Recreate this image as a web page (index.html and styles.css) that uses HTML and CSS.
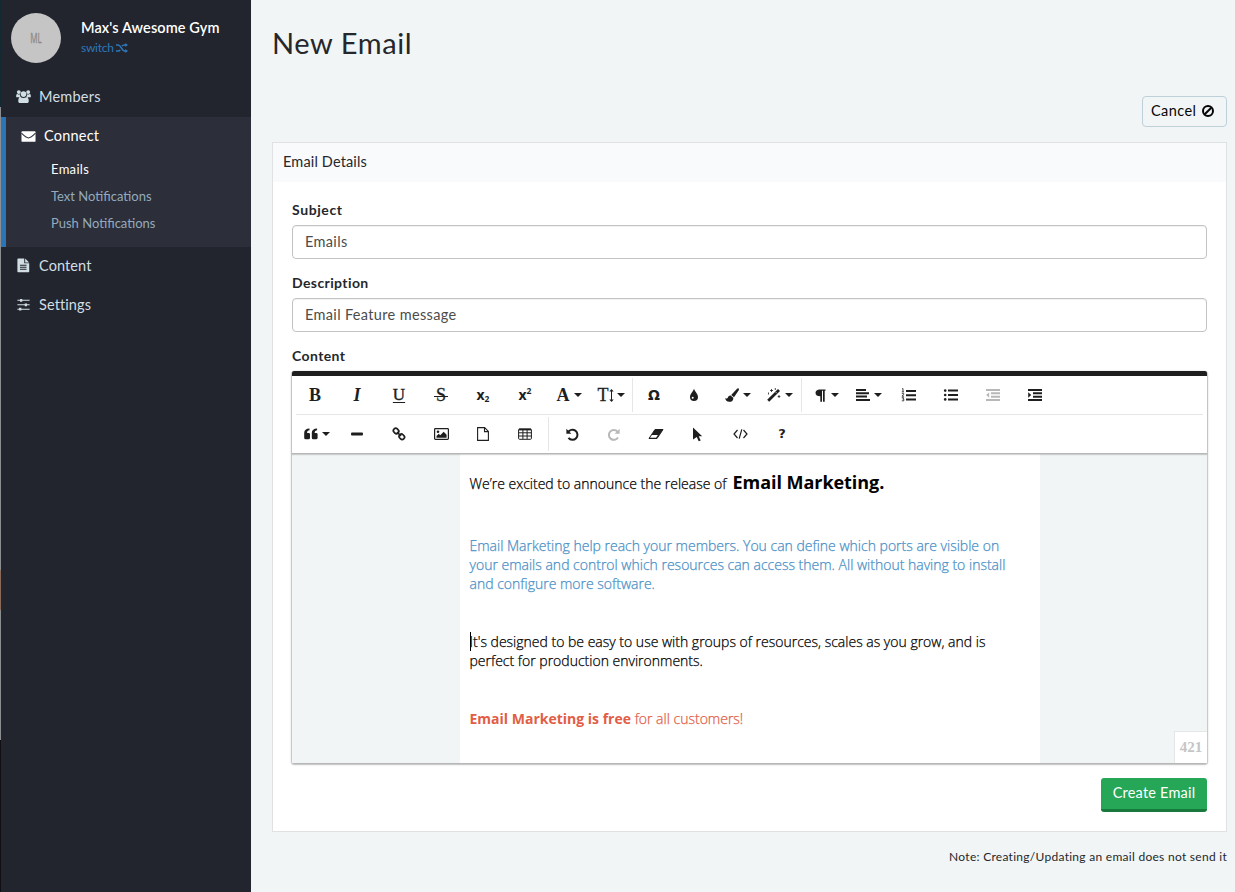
FILE: index.html
```html
<!DOCTYPE html>
<html lang="en">
<head>
<meta charset="utf-8">
<title>New Email</title>
<link rel="stylesheet" href="styles.css">
</head>
<body>
<div class="app">
  <aside class="sidebar">
    <div class="profile">
      <div class="avatar"><span>ML</span></div>
      <div class="profile-text">
        <div class="gym"><span>Max's Awesome Gym</span></div>
        <a class="switch"><span>switch</span>
          <svg width="12" height="10" viewBox="0 0 12 10" fill="none" stroke="currentColor" stroke-width="1.5"><path d="M0 2h2.2C5.5 2 5.5 8 8.5 8H10M0 8h2.2c1 0 1.6-.5 2-1.2M6 3.2C6.500 2.400 7.200 2 8.500 2H10"/><path d="M9.300 0v4L12 2zM9.300 6v4L12 8z" fill="currentColor" stroke="none"/></svg>
        </a>
      </div>
    </div>
    <nav class="nav">
      <a class="nav-item">
        <svg width="16" height="16" viewBox="0 0 16 16" fill="currentColor"><circle cx="3" cy="3.300" r="2.100"/><circle cx="13" cy="3.300" r="2.100"/><circle cx="8" cy="5.400" r="3"/><path d="M.2 8.900V7.200c0-1.200.5-1.900 1.400-1.900.8.700 1.700.8 2.600.3 0 1.400.4 2.300 1.100 3.300zM15.800 8.900V7.200c0-1.200-.5-1.900-1.400-1.900-.8.700-1.700.8-2.600.3 0 1.400-.4 2.300-1.100 3.300zM4.800 8.600c1.900 1.500 4.500 1.500 6.400 0 1.700.1 2.400 1.800 2.400 4.200 0 1.400-.8 2.200-2 2.200H4.400c-1.200 0-2-.8-2-2.200 0-2.400.7-4.100 2.400-4.200z"/></svg>
        <span>Members</span>
      </a>
      <div class="nav-group">
        <a class="nav-item">
          <svg width="16" height="16" viewBox="0 0 16 16"><path fill="currentColor" d="M1.500 2.500h13q1 0 1 1v9.200q0 1-1 1h-13q-1 0-1-1V3.500q0-1 1-1z"/><path d="M.5 4.500C3 7 6 9.500 8 9.500s5-2.500 7.500-5" fill="none" stroke="#2c2e3a" stroke-width="1.100"/></svg>
          <span>Connect</span>
        </a>
        <a class="sub current"><span>Emails</span></a>
        <a class="sub"><span>Text Notifications</span></a>
        <a class="sub"><span>Push Notifications</span></a>
      </div>
      <a class="nav-item lower">
        <svg width="16" height="16" viewBox="0 0 16 16"><path fill="currentColor" d="M2.300.600h6.500v5.100h5.300v8.700q0 .8-.8.800h-11q-.8 0-.8-.8v-13q0-.8.800-.8zM9.800.600l4.200 4.200H9.800z"/><path d="M4.200 7.700h7M4.200 9.900h7M4.200 12.100h7" stroke="#22252e" stroke-width="1.100"/></svg>
        <span>Content</span>
      </a>
      <a class="nav-item lower">
        <svg width="16" height="16" viewBox="0 0 16 16" stroke="currentColor"><path d="M1.500 3.500h13M1.500 8.300h13M1.500 13h13" stroke-width="1.200"/><path d="M5.500 2v3M10.500 6.800v3M4.500 11.500v3" stroke-width="2.400"/></svg>
        <span>Settings</span>
      </a>
    </nav>
  </aside>
  <main class="main">
    <h1><span>New Email</span></h1>
    <div class="actions">
      <button class="cancel"><span>Cancel</span><svg width="12" height="12" viewBox="0 0 12 12" fill="none" stroke="currentColor" stroke-width="2"><circle cx="6" cy="6" r="5"/><path d="M2.700 9.300l6.600-6.600"/></svg></button>
    </div>
    <section class="panel">
      <header><span>Email Details</span></header>
      <div class="panel-body">
        <label class="l-subject"><span>Subject</span></label>
        <div class="input"><span>Emails</span></div>
        <label><span>Description</span></label>
        <div class="input"><span>Email Feature message</span></div>
        <label><span>Content</span></label>
        <div class="editor">
          <div class="toolbar">
            <div class="row">
              <b class="tool letter">B</b>
              <i class="tool letter">I</i>
              <span class="tool letter u">U</span>
              <span class="tool letter strike"><span>S</span></span>
              <span class="tool script-x">x<sub>2</sub></span>
              <span class="tool script-x">x<sup>2</sup></span>
              <span class="tool drop letter first">A<i class="caret"></i></span>
              <span class="tool drop letter size">T<svg width="5" height="13" viewBox="0 0 5 13"><path d="M2.500 1v11" stroke="currentColor"/><path d="M.3 2.500L2.500 0l2.200 2.500zM.3 10.500L2.500 13l2.200-2.500z" fill="currentColor"/></svg><i class="caret"></i></span>
              <span class="sep"></span>
              <b class="tool omega">Ω</b>
              <span class="tool droplet"><svg width="10" height="14" viewBox="0 0 10 14"><path fill="currentColor" d="M5 .8c.8 2.900 4 5.200 4 8.200a4 4 0 0 1-8 0C1 6 4.200 3.700 5 .8z"/><circle cx="3.700" cy="9.700" r="1" fill="#fff"/></svg></span>
              <span class="tool drop back"><svg width="14" height="14" viewBox="0 0 14 14" fill="currentColor"><path d="M13.600.4c.7.600.3 1.500 0 2.100L9 9.300 6.200 6.900l5.600-5.800c.5-.6 1.200-1.200 1.800-.7zM5.600 7.500l2.700 2.200c.2 2.700-1.300 4.100-4 4.100C1.800 13.800.5 12.300.1 10c1.500.9 2.300.7 3-1 .5-1 1.500-1.500 2.500-1.500z"/></svg><i class="caret"></i></span>
              <span class="tool drop back"><svg width="14" height="14" viewBox="0 0 14 14"><path d="M1.200 12.800L12 2" stroke="currentColor" stroke-width="2.800"/><path d="M8.800 4.200l1 1" stroke="#fff" stroke-width=".8"/><path d="M4.500 1v3M3 2.500h3M1.500 4.500v2M8.300 0v2M12 7v3M10.700 8.500h2.600" stroke="currentColor" stroke-width=".8"/></svg><i class="caret"></i></span>
              <span class="sep s2"></span>
              <span class="tool drop"><svg width="11" height="13" viewBox="0 0 11 13"><path fill="currentColor" d="M10.500.500v1.300H9.700v11H8V1.800H7v11H5.300V7.300C2.300 7.300.5 6 .5 4S2.200.5 4.600.5z"/></svg><i class="caret"></i></span>
              <span class="tool drop align"><svg width="14" height="12" viewBox="0 0 14 12"><path d="M0 1h10M0 4.300h13M0 7.600h11M0 11h14" stroke="currentColor" stroke-width="2"/></svg><i class="caret"></i></span>
              <span class="tool list"><svg width="16" height="14" viewBox="0 0 16 14"><path d="M5 3h10M5 7.200h10M5 11.500h10" stroke="currentColor" stroke-width="1.900"/><path d="M1 1.100l1-.6v3.400M.8 3.900H3M.8 5.600h1.900v1L.9 8.200H3M.8 9.700h2l-1 1.400h1v1.700h-2" fill="none" stroke="currentColor" stroke-width=".8"/></svg></span>
              <span class="tool"><svg width="16" height="14" viewBox="0 0 16 14"><path d="M5 2.600h10M5 7h10M5 11.400h10" stroke="currentColor" stroke-width="2"/><g fill="currentColor"><circle cx="2.200" cy="2.600" r="1.300"/><circle cx="2.200" cy="7" r="1.300"/><circle cx="2.200" cy="11.400" r="1.300"/></g></svg></span>
              <span class="tool off"><svg width="14" height="12" viewBox="0 0 14 12"><path d="M0 1h14M5 4.300h9M5 7.700h9M0 11h14" stroke="currentColor" stroke-width="1.900"/><path d="M3.200 3.200v5.600L.2 6z" fill="currentColor"/></svg></span>
              <span class="tool"><svg width="14" height="12" viewBox="0 0 14 12"><path d="M0 1h14M5 4.300h9M5 7.700h9M0 11h14" stroke="currentColor" stroke-width="2"/><path d="M.2 3.200v5.600l3-2.800z" fill="currentColor"/></svg></span>
            </div>
            <div class="row">
              <span class="tool drop quote"><svg width="14" height="12" viewBox="0 0 14 12"><path id="q" fill="currentColor" d="M5.500.5v1.800c-1.600 0-2.400 1-2.400 2.600h1.600q1.300 0 1.300 1.300v3.500q0 1.500-1.500 1.500H1.600Q.2 11.200.2 9.700V5C.2 2.200 2.200.500 5.500.500z"/><use href="#q" x="7.600"/></svg><i class="caret"></i></span>
              <span class="tool"><svg width="12" height="4" viewBox="0 0 12 4"><rect y=".5" width="12" height="3" rx="1" fill="currentColor"/></svg></span>
              <span class="tool"><svg width="14" height="14" viewBox="0 0 14 14" fill="none" stroke="currentColor" stroke-width="1.700"><rect x="1.300" y="1.700" width="5.600" height="4.600" rx="2.200" transform="rotate(45 4.100 4)"/><rect x="7" y="7.500" width="5.600" height="4.600" rx="2.200" transform="rotate(45 9.800 9.800)"/><path d="M5 5l4 4"/></svg></span>
              <span class="tool"><svg width="15" height="12" viewBox="0 0 15 12"><rect x=".6" y=".6" width="13.800" height="10.800" rx=".8" fill="none" stroke="currentColor" stroke-width="1.200"/><circle cx="4" cy="3.800" r="1.300" fill="currentColor"/><path d="M2.500 9.700V8l2.200-2.200 1.500 1.500 3.500-3.600 2.900 3v3z" fill="currentColor"/></svg></span>
              <span class="tool"><svg width="12" height="14" viewBox="0 0 12 14" fill="none" stroke="currentColor" stroke-width="1.100"><path d="M.6.6h7l3.800 3.800v9H.6zM7.500.6v4h4"/></svg></span>
              <span class="tool"><svg width="14" height="12" viewBox="0 0 14 12" fill="none" stroke="currentColor"><rect x=".6" y="1" width="12.800" height="10.300" rx="1"/><path d="M1 1.500h12" stroke-width="1.800"/><path d="M.6 4.800h12.800M.6 8h12.800M4.900 2v9M9.100 2v9"/></svg></span>
              <span class="sep s3"></span>
              <span class="tool"><svg width="13" height="13" viewBox="0 0 13 13"><path d="M2 4.500A5 5 0 1 1 2.500 9.800" fill="none" stroke="currentColor" stroke-width="2"/><path d="M.4.800v5h5z" fill="currentColor"/></svg></span>
              <span class="tool off redo"><svg width="13" height="13" viewBox="0 0 13 13"><path d="M10.500 3.700A4.900 4.900 0 1 0 11 9.500" fill="none" stroke="currentColor" stroke-width="2"/><path d="M12.600.8v5h-5z" fill="currentColor"/></svg></span>
              <span class="tool"><svg width="16" height="12" viewBox="0 0 16 12"><path d="M7 1.500h8L9 10.500H1z" fill="currentColor" stroke="currentColor" stroke-linejoin="round"/><path d="M3.900 6.900h6l-1.800 2.800h-6z" fill="#fff"/></svg></span>
              <span class="tool pointer"><svg width="11" height="15" viewBox="0 0 11 15"><path d="M1 .5l9.200 8.700H6.700l2 4.200-2 .9-1.900-4.300L1 12.500z" fill="currentColor"/></svg></span>
              <span class="tool"><svg width="15" height="10" viewBox="0 0 15 10" fill="none" stroke="currentColor" stroke-width="1.200"><path d="M4.500 1L1 5l3.500 4M10.500 1L14 5l-3.500 4M8.800.4L6.200 9.600"/></svg></span>
              <b class="tool help">?</b>
            </div>
          </div>
          <div class="canvas">
            <article class="doc">
              <p class="intro"><span>We’re excited to announce the release of&nbsp;</span> <strong>Email Marketing.</strong></p>
              <p class="blue">Email Marketing help reach your members. You can define which ports are visible on<br>your emails and control which resources can access them. All without having to install<br>and configure more software.</p>
              <p class="black"><span class="cursor"></span>It's designed to be easy to use with groups of resources, scales as you grow, and is<br>perfect for production environments.</p>
              <p class="red"><b>Email Marketing is free</b> <span>for all customers!</span></p>
            </article>
            <div class="count">421</div>
          </div>
        </div>
        <div class="submit"><button class="create"><span>Create Email</span></button></div>
      </div>
    </section>
    <p class="note"><span>Note: Creating/Updating an email does not send it</span></p>
  </main>
</div>
</body>
</html>
```
FILE: styles.css
```css
* { box-sizing: border-box; }
body { margin: 0; background: #f1f5f6; color: #25272b; font: 14px/20px Lato, "Open Sans", sans-serif; }
svg { display: block; flex: none; }
button { font: inherit; }
.app { display: flex; height: 892px; overflow: hidden; }

.sidebar { width: 251px; flex: none; background: #22252e; position: relative; padding-left: 1px; }
.sidebar::before { content: ""; position: absolute; left: 0; top: 0; width: 1px; height: 100%; background: linear-gradient(#142a32 0 107px, #8b8d8e 107px 570px, #8a6a58 570px 610px, #8b8d8e 610px 740px, #101014 740px); }
.profile { display: flex; gap: 20px; padding: 13px 0 0 10px; height: 77px; }
.avatar { width: 50px; height: 50px; border-radius: 50%; background: #c5c5c5; display: flex; align-items: center; justify-content: center; color: #8c8c8c; font: 14px/20px "Open Sans", sans-serif; }
.avatar span { transform: scaleX(.58); -webkit-text-stroke: .4px; }
.profile-text { padding-top: 5px; }
.gym { color: #fff; font-size: 14.500px; font-weight: 600; line-height: 20px; letter-spacing: .1px; }
.switch { display: flex; align-items: center; gap: 2px; color: #2e77bb; font-size: 12px; letter-spacing: -.25px; }
.nav-item { display: flex; align-items: center; gap: 8px; height: 39px; padding-left: 15px; color: #d1dfe5; font-size: 14.500px; letter-spacing: .22px; }
.nav-item svg { width: 15px; height: 15px; }
.nav-item.lower { padding-bottom: 2px; letter-spacing: .1px; }
.nav-group { background: #2c2e3a; border-left: 5px solid #2b74b8; height: 130px; margin-top: 1px; }
.nav-group .nav-item { color: #fff; height: 38px; }
.sub { display: block; padding-left: 45px; height: 27px; line-height: 29px; font-size: 13px; color: #93abbd; }
.sub.current { color: #fff; letter-spacing: .3px; }

.main { flex: 1; padding: 0 8px 0 21px; min-width: 0; }
h1 { margin: 0; height: 96px; padding-top: 23px; font-size: 29px; line-height: 40px; font-weight: 400; letter-spacing: .6px; }
.actions { display: flex; justify-content: flex-end; height: 46px; }
.cancel { width: 85px; height: 31px; display: flex; align-items: center; justify-content: flex-start; gap: 6px; padding: 0 0 0 8px; background: transparent; border: 1px solid #bdd0d9; border-radius: 4px; color: #050505; font-size: 14.500px; letter-spacing: .4px; }
.cancel span { margin-top: -2px; }
.cancel svg { margin-top: -1px; }
.panel { background: #fff; border: 1px solid #dfe1e2; height: 690px; }
.panel header { height: 39px; padding: 9px 10px; background: #f9fafc; font-size: 14.500px; letter-spacing: .15px; }
.panel-body { padding: 18px 19px 0; }
label { display: block; height: 25px; font-weight: 700; letter-spacing: .4px; }
.l-subject { letter-spacing: .6px; }
.input { height: 34px; margin-bottom: 14px; padding: 6px 12px; border: 1px solid #c3c3c3; border-radius: 4px; box-shadow: inset 0 1px 1px rgba(0,0,0,.06); color: #4c4c4c; font-size: 14.500px; letter-spacing: .34px; }

.editor { border-top: 5px solid #1e1e1e; border-radius: 2px; box-shadow: 0 1px 3px rgba(0,0,0,.22), 0 1px 1px 1px rgba(0,0,0,.16); }
.toolbar { height: 78px; border-bottom: 1px solid #b7b7b7; box-shadow: 0 1px 1px rgba(0,0,0,.16); position: relative; z-index: 1; color: #1e1e1e; }
.row { display: flex; height: 38px; margin: 0 4px; padding: 0; }
.row:first-child { height: 39px; border-bottom: 1px solid #e6e6e6; }
.row .tool:first-child { margin-left: -2px; }
.tool { width: 42px; height: 38px; flex: none; display: flex; align-items: center; justify-content: center; }
.letter { font-family: "Liberation Serif", serif; font-size: 18px; font-weight: 700; }
.u { font-size: 17px; font-weight: 400; text-decoration: underline; text-underline-offset: 2px; text-decoration-thickness: 1px; -webkit-text-stroke: .4px; }
.strike { font-weight: 400; -webkit-text-stroke: .3px; }
.strike span { padding: 0 2px; background: linear-gradient(currentColor, currentColor) center 11px / 100% 1px no-repeat; }
.script-x { font: 700 14px/20px "Open Sans", sans-serif; }
.script-x sub, .script-x sup { font-size: 8.500px; line-height: 10px; }
.script-x sub { margin-top: 8px; }
.script-x sup { margin-bottom: 9px; }
.drop { gap: 5px; }
.back { gap: 4px; padding-right: 1px; }
.first { margin-left: 1px; gap: 4px; padding-left: 2px; }
.size { font-weight: 400; gap: 0; padding-left: 2px; -webkit-text-stroke: .3px; }
.size .caret { margin-left: 3px; }
.caret { border: 4px solid transparent; border-top-color: currentColor; border-bottom: 0; }
.sep { width: 1px; height: 34px; margin: 2px 0 0 1px; background: #e6e6e6; flex: none; }
.sep.s2 { margin: 2px 4px 0 0; }
.sep.s3 { margin: 2px 2px 0 2px; }
.omega { font: 700 14px/20px "DejaVu Sans", sans-serif; }
.droplet { padding-right: 4px; }
.align { gap: 4px; }
.list { margin-left: -2px; }
.off { color: #b8b8b8; }
.redo { padding-right: 2px; }
.pointer { padding-right: 2px; }
.quote { gap: 4px; padding-left: 4px; }
.help { font: 700 13px/20px "DejaVu Sans", sans-serif; }

.canvas { height: 309px; background: #f1f5f6; display: flex; justify-content: center; position: relative; }
.doc { width: 580px; margin-left: 1px; background: #fff; padding: 17px 10px 0 9.500px; font: 300 14px/19px "Open Sans", sans-serif; color: #000; white-space: nowrap; -webkit-text-stroke: .25px; }
.doc p { margin: 0; }
.doc .intro { height: 65px; line-height: 22px; }
.intro strong { margin-left: -1.200px; font-size: 18px; font-weight: 700; letter-spacing: -.05px; -webkit-text-stroke: 0; }
.blue { color: #4a90c6; height: 96px; }
.black { height: 77px; position: relative; }
.cursor { position: absolute; left: .5px; top: 0; width: 1px; height: 19px; background: #000; }
.red { color: #e25d46; }
.red b { font-weight: 700; -webkit-text-stroke: 0; }
.count { position: absolute; right: 0; bottom: 0; width: 33px; height: 32px; border: solid #e4e6e7; border-width: 1px 0 0 1px; background: #fff; color: #c5c5c5; font: 700 15px/31px "Liberation Serif", serif; text-align: center; }
.submit { display: flex; justify-content: flex-end; padding-top: 15px; }
.create { width: 106px; height: 34px; padding: 0 0 1px; border: 0; border-bottom: 3px solid #18793c; border-radius: 3px; background: #26a657; color: #fff; font-size: 14.500px; letter-spacing: .2px; }
.note { margin: 15px 0 0; text-align: right; font-size: 12px; letter-spacing: .28px; }
```
